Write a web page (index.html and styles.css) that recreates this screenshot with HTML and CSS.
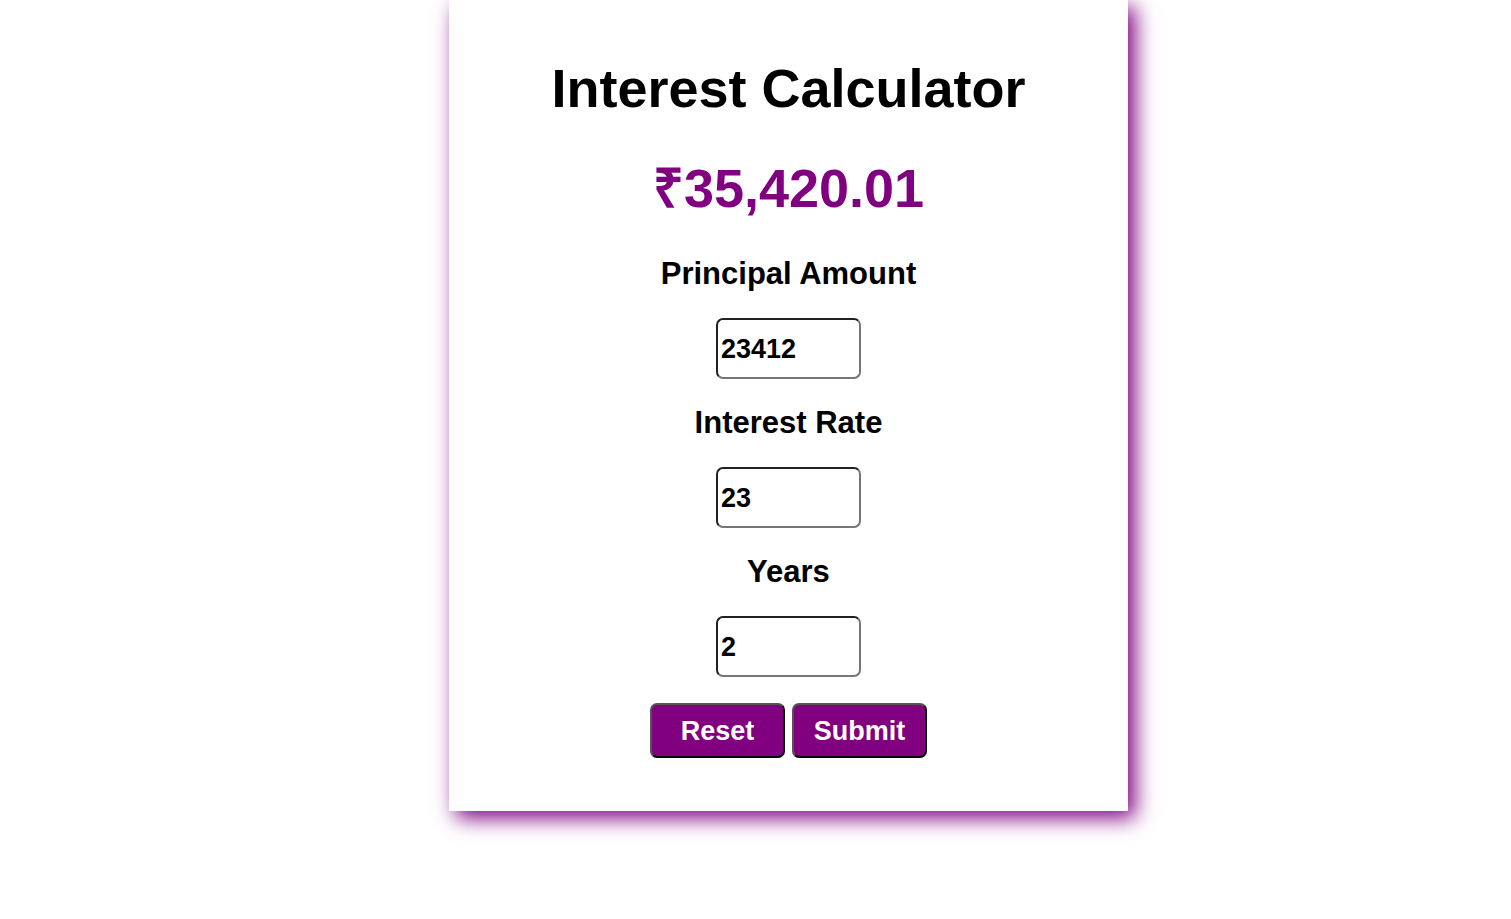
FILE: index.html
```html
<!DOCTYPE html>
<html lang="en">
<head>
<meta charset="utf-8">
<meta name="viewport" content="width=device-width, initial-scale=1">
<title>Interest Calculator</title>
<link rel="stylesheet" href="styles.css">
</head>
<body class="page">
<main class="calculator">
  <h1 class="title">Interest Calculator</h1>
  <output class="total" for="principal rate years">₹35,420.01</output>
  <form class="form">
    <label class="label" for="principal">Principal Amount</label>
    <input class="field" id="principal" type="text" inputmode="decimal" value="23412">
    <label class="label" for="rate">Interest Rate</label>
    <input class="field" id="rate" type="text" inputmode="decimal" value="23">
    <label class="label" for="years">Years</label>
    <input class="field" id="years" type="text" inputmode="decimal" value="2">
    <div class="actions">
      <button class="button" type="reset">Reset</button>
      <button class="button" type="button">Submit</button>
    </div>
  </form>
</main>
</body>
</html>
```
FILE: styles.css
```css
* {
  box-sizing: border-box;
}

.page {
  display: grid;
  grid-template-columns: 449fr 679fr 383fr;
  align-items: start;
  min-height: 100vh;
  margin: 0;
  background: #fff;
  color: #000;
  font-family: Arial, "Liberation Sans", sans-serif;
  font-weight: bold;
}

.calculator {
  grid-column: 2;
  display: flex;
  flex-direction: column;
  align-items: center;
  padding: 58px 20px 53px;
  background: #fff;
  box-shadow: 7px 7px 20px purple;
}

.title {
  margin: 0;
  font-size: 54px;
  line-height: 60px;
}

.total {
  margin-top: 40px;
  color: purple;
  font-size: 54px;
  line-height: 60px;
}

.form {
  display: flex;
  flex-direction: column;
  align-items: center;
  margin-top: 38px;
}

.label {
  font-size: 31px;
  line-height: 36px;
}

.field {
  width: 145px;
  height: 61px;
  margin: 26px 0;
  padding: 2px 2px 0 3px;
  border: 2px inset #767676;
  border-radius: 7px;
  background: #fff;
  color: #000;
  font: inherit;
  font-size: 27px;
}

.actions {
  display: flex;
  gap: 7px;
}

.button {
  width: 135px;
  height: 55px;
  padding: 1px 0 0;
  border: 2px outset #000;
  border-radius: 7px;
  background: purple;
  color: #fff;
  font: inherit;
  font-size: 27px;
}
```
